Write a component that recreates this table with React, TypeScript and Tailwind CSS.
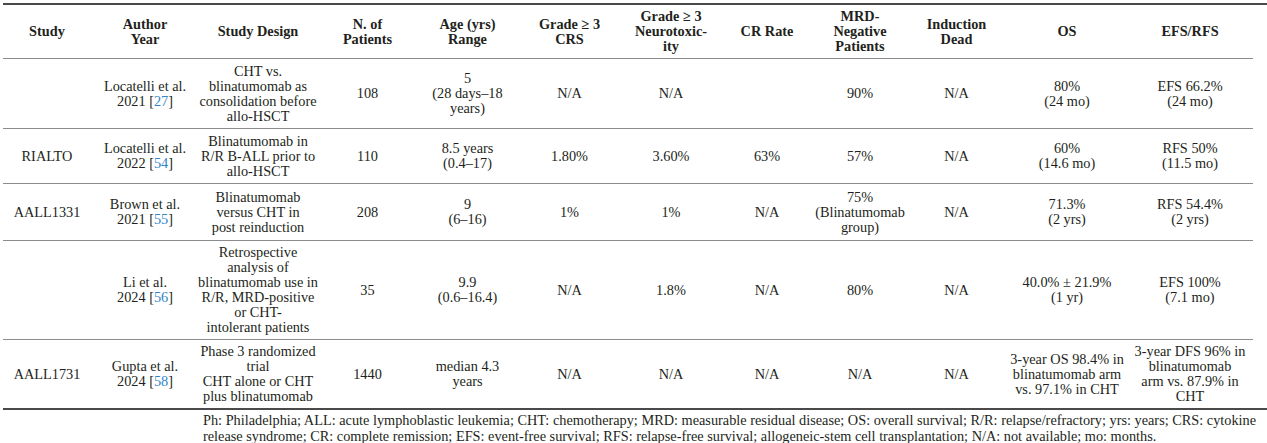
const cols =
  "grid grid-cols-[88px_108px_118px_101px_99px_105px_98px_94px_92px_101px_120px_126px]";

function Ref({ n }: { n: string }) {
  return (
    <>
      [<span className="text-[#2f86c8]">{n}</span>]
    </>
  );
}

function Cell({ children, bold }: { children?: React.ReactNode; bold?: boolean }) {
  return (
    <div
      className={
        bold
          ? "flex items-center justify-center text-center font-bold whitespace-nowrap"
          : "flex items-center justify-center text-center whitespace-nowrap"
      }
    >
      <div>{children}</div>
    </div>
  );
}

const rows: { h: string; cells: React.ReactNode[] }[] = [
  {
    h: "h-[70px]",
    cells: [
      "",
      <>Locatelli et al.<br />2021 <Ref n="27" /></>,
      <>CHT vs.<br />blinatumomab as<br />consolidation before<br />allo-HSCT</>,
      "108",
      <>5<br />(28 days–18<br />years)</>,
      "N/A",
      "N/A",
      "",
      "90%",
      "N/A",
      <>80%<br />(24 mo)</>,
      <>EFS 66.2%<br />(24 mo)</>,
    ],
  },
  {
    h: "h-[55px]",
    cells: [
      "RIALTO",
      <>Locatelli et al.<br />2022 <Ref n="54" /></>,
      <>Blinatumomab in<br />R/R B-ALL prior to<br />allo-HSCT</>,
      "110",
      <>8.5 years<br />(0.4–17)</>,
      "1.80%",
      "3.60%",
      "63%",
      "57%",
      "N/A",
      <>60%<br />(14.6 mo)</>,
      <>RFS 50%<br />(11.5 mo)</>,
    ],
  },
  {
    h: "h-[57px]",
    cells: [
      "AALL1331",
      <>Brown et al.<br />2021 <Ref n="55" /></>,
      <>Blinatumomab<br />versus CHT in<br />post reinduction</>,
      "208",
      <>9<br />(6–16)</>,
      "1%",
      "1%",
      "N/A",
      <>75%<br />(Blinatumomab<br />group)</>,
      "N/A",
      <>71.3%<br />(2 yrs)</>,
      <>RFS 54.4%<br />(2 yrs)</>,
    ],
  },
  {
    h: "h-[99px]",
    cells: [
      "",
      <>Li et al.<br />2024 <Ref n="56" /></>,
      <>Retrospective<br />analysis of<br />blinatumomab use in<br />R/R, MRD-positive<br />or CHT-<br />intolerant patients</>,
      "35",
      <>9.9<br />(0.6–16.4)</>,
      "N/A",
      "1.8%",
      "N/A",
      "80%",
      "N/A",
      <>40.0% ± 21.9%<br />(1 yr)</>,
      <>EFS 100%<br />(7.1 mo)</>,
    ],
  },
  {
    h: "h-[68px]",
    cells: [
      "AALL1731",
      <>Gupta et al.<br />2024 <Ref n="58" /></>,
      <>Phase 3 randomized<br />trial<br />CHT alone or CHT<br />plus blinatumomab</>,
      "1440",
      <>median 4.3<br />years</>,
      "N/A",
      "N/A",
      "N/A",
      "N/A",
      "N/A",
      <>3-year OS 98.4% in<br />blinatumomab arm<br />vs. 97.1% in CHT</>,
      <>3-year DFS 96% in<br />blinatumomab<br />arm vs. 87.9% in<br />CHT</>,
    ],
  },
];

const headers: React.ReactNode[] = [
  "Study",
  <>Author<br />Year</>,
  "Study Design",
  <>N. of<br />Patients</>,
  <>Age (yrs)<br />Range</>,
  <>Grade ≥ 3<br />CRS</>,
  <>Grade ≥ 3<br />Neurotoxic-<br />ity</>,
  "CR Rate",
  <>MRD-<br />Negative<br />Patients</>,
  <>Induction<br />Dead</>,
  "OS",
  "EFS/RFS",
];

export default function App() {
  return (
    <div className="w-[1267px] h-[443px] overflow-hidden bg-white text-[#231f20] [font-family:'Liberation_Serif',serif] text-[14.3px] leading-[15px]">
      <div className="pt-[3px] pl-[3px]">
        <div className="border-t-2 border-[#4a4a4a]" />
        <div className="w-[1250px]">
          <div className={`${cols} h-[54px] border-b border-[#8c8c8c]`}>
            {headers.map((h, i) => (
              <Cell key={i} bold>
                {h}
              </Cell>
            ))}
          </div>
          {rows.map((r, i) => (
            <div
              key={i}
              className={`${cols} ${r.h} ${i < rows.length - 1 ? "border-b border-[#8c8c8c]" : ""}`}
            >
              {r.cells.map((c, j) => (
                <Cell key={j}>{c}</Cell>
              ))}
            </div>
          ))}
        </div>
        <div className="border-t-2 border-[#4a4a4a]" />
        <p className="pl-[200px] pt-[2px] leading-[16px] whitespace-nowrap">
          Ph: Philadelphia; ALL: acute lymphoblastic leukemia; CHT: chemotherapy; MRD: measurable residual disease; OS: overall survival; R/R: relapse/refractory; yrs: years; CRS: cytokine
          <br />
          release syndrome; CR: complete remission; EFS: event-free survival; RFS: relapse-free survival; allogeneic-stem cell transplantation; N/A: not available; mo: months.
        </p>
      </div>
    </div>
  );
}
